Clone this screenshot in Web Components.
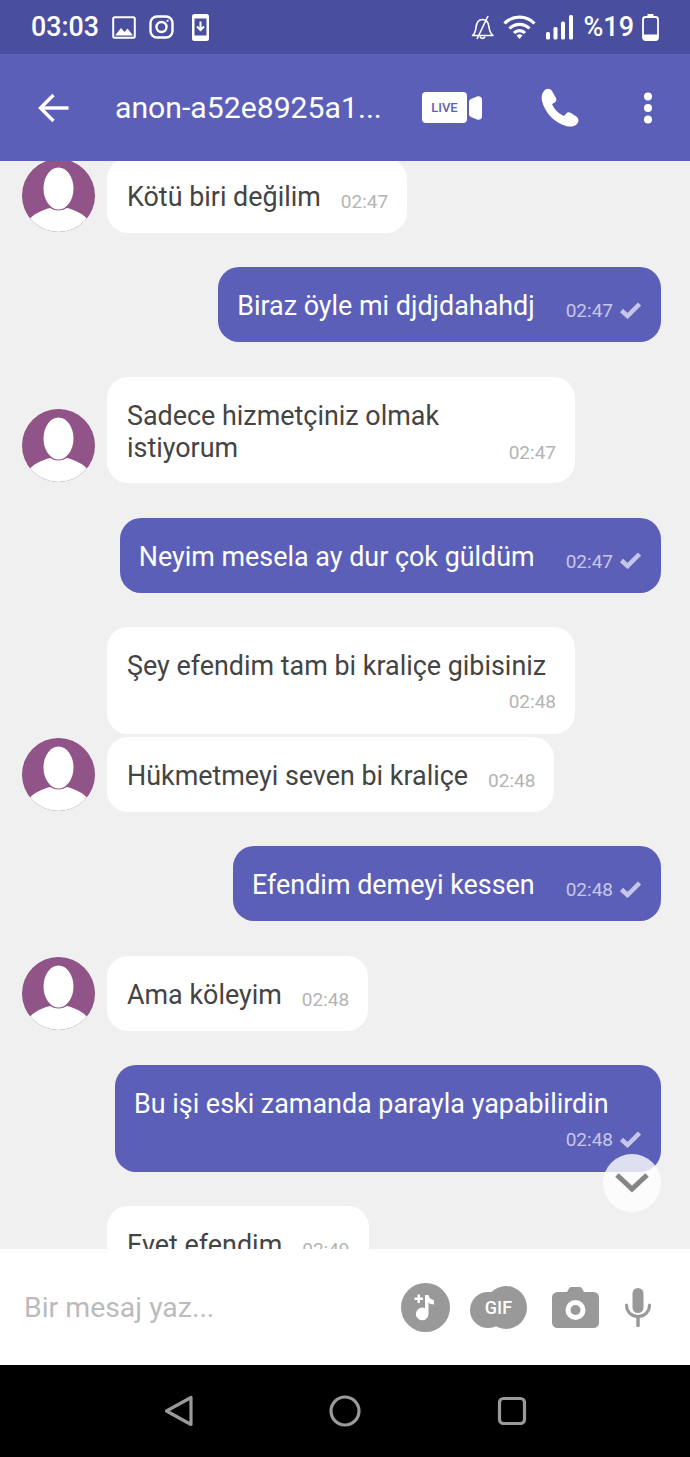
<!DOCTYPE html>
<html lang="tr">
<head>
<meta charset="utf-8">
<title>Chat</title>
<style>
html,body{margin:0;padding:0;background:#f0f0f0;font-family:Roboto,"Noto Sans",sans-serif}
</style>
</head>
<body>
<app-screen>
  <status-bar slot="top"></status-bar>
  <chat-header slot="top" name="anon-a52e8925a1..."></chat-header>
  <chat-msg side="in" avatar time="02:47">Kötü biri değilim</chat-msg>
  <chat-msg side="out" time="02:47">Biraz öyle mi djdjdahahdj</chat-msg>
  <chat-msg side="in" avatar time="02:47">Sadece hizmetçiniz olmak istiyorum</chat-msg>
  <chat-msg side="out" time="02:47">Neyim mesela ay dur çok güldüm</chat-msg>
  <chat-msg side="in" stack time="02:48">Şey efendim tam bi kraliçe gibisiniz</chat-msg>
  <chat-msg side="in" avatar tight time="02:48">Hükmetmeyi seven bi kraliçe</chat-msg>
  <chat-msg side="out" time="02:48">Efendim demeyi kessen</chat-msg>
  <chat-msg side="in" avatar time="02:48">Ama köleyim</chat-msg>
  <chat-msg side="out" stack time="02:48">Bu işi eski zamanda parayla yapabilirdin</chat-msg>
  <chat-msg side="in" time="02:49">Evet efendim</chat-msg>
  <scroll-down slot="overlay"></scroll-down>
  <chat-input slot="bottom" placeholder="Bir mesaj yaz..."></chat-input>
  <nav-bar slot="bottom"></nav-bar>
</app-screen>
<script>
function def(name, css, html, init){
  customElements.define(name, class extends HTMLElement{
    connectedCallback(){
      if(this.shadowRoot) return;
      const r=this.attachShadow({mode:'open'});
      r.innerHTML='<style>'+css+'</style>'+(typeof html==='function'?html(this):html);
      if(init) init(this,r);
    }
  });
}
def('app-screen',`
:host{display:flex;flex-direction:column;width:690px;height:1457px;overflow:hidden;font-family:Roboto,"Noto Sans",sans-serif}
.chat{flex:1;min-height:0;position:relative;overflow:hidden;background:#f0f0f0}
.list{display:flex;flex-direction:column;margin-top:-37.5px;padding:0 29px 0 22px}
`,`<slot name="top"></slot><div class="chat"><div class="list"><slot></slot></div><slot name="overlay"></slot></div><slot name="bottom"></slot>`);

def('status-bar',`
:host{display:flex;align-items:center;height:54px;background:#4a4e9e;color:#fff;box-sizing:border-box;padding:0 31px;flex:none}
.t{font-size:26.800px;font-weight:500;line-height:54px;width:81px}
.p{font-size:27px;font-weight:500;line-height:54px}
svg{display:block;flex:none}
.sp{flex:1}
`,`
<span class="t">03:03</span>
<svg width="24" height="23" viewBox="0 0 24 23" fill="none"><rect x="1.2" y="1.2" width="21.6" height="20.6" rx="1.5" stroke="#fff" stroke-width="2"/><path d="M3 19.5 9 12l3.5 4 3-3.500 5.500 7z" fill="#fff"/></svg>
<svg style="margin-left:13px" width="25" height="24" viewBox="0 0 25 24" fill="none" stroke="#fff" stroke-width="2.4"><rect x="1.5" y="1.5" width="22" height="21" rx="6.5"/><circle cx="12.5" cy="12" r="5"/><circle cx="18.6" cy="5.8" r="1.1" fill="#fff" stroke="none"/></svg>
<svg style="margin-left:18px" width="17" height="27" viewBox="0 0 17 27"><path fill="#fff" d="M2.500 0h12A2.500 2.500 0 0 1 17 2.500v22a2.500 2.500 0 0 1-2.500 2.500h-12A2.500 2.500 0 0 1 0 24.500v-22A2.500 2.500 0 0 1 2.500 0z"/><rect x="2.500" y="4.500" width="12" height="17" fill="#4a4e9e"/><path d="M8.500 7.500v8M5 12.500l3.500 3.500 3.500-3.500" fill="none" stroke="#fff" stroke-width="2"/></svg>
<span class="sp"></span>
<svg width="23" height="25" viewBox="0 0 23 25" fill="none" stroke="#fff" stroke-width="1.6"><path d="M1.500 20.500c2.500-2 3-3.500 3.500-8 .5-5 3-8 6.500-8s6 3 6.500 7.500c.5 4.500 1.500 6.500 4 8.500z" stroke-linejoin="round"/><path d="M9 21.500a2.600 2.600 0 0 0 5 0"/><path d="M17 1 6 24"/></svg>
<svg style="margin-left:9px" width="33" height="25" viewBox="0 0 33 25" fill="none" stroke="#fff" stroke-width="3.200"><path d="M1.500 8.500a21 21 0 0 1 30 0"/><path d="M6.500 13.500a14 14 0 0 1 20 0"/><path d="M11 18a7.500 7.500 0 0 1 11 0"/><path d="M13.500 20.500 16.500 24l3-3.500a4 4 0 0 0-6 0z" fill="#fff" stroke="none"/></svg>
<svg style="margin-left:10px" width="27" height="25" viewBox="0 0 27 25" fill="#fff"><rect x="0" y="17" width="4" height="7.500" rx="1.500"/><rect x="7.500" y="12" width="4" height="12.500" rx="1.500"/><rect x="15" y="6.500" width="4" height="18" rx="1.500"/><rect x="23" y="0" width="4" height="24.500" rx="1.500"/></svg>
<span class="p" style="margin-left:10px">%19</span>
<svg style="margin-left:8px" width="17" height="27" viewBox="0 0 17 27" fill="none"><path d="M5.500 0h6v3h-6z" fill="#fff"/><rect x="1" y="3" width="15" height="23" rx="2.500" stroke="#fff" stroke-width="1.800"/><path d="M1 20.500h15V23.500a2.500 2.500 0 0 1-2.500 2.500h-10A2.500 2.500 0 0 1 1 23.500z" fill="#fff"/></svg>
`);

def('chat-header',`
:host{display:flex;align-items:center;height:107px;background:#5c5fb8;color:#fff;flex:none;box-sizing:border-box;padding:0 34px 0 38px}
.n{font-size:30.200px;line-height:34px;margin-left:46px;flex:1;white-space:nowrap;min-width:0}
svg{display:block;flex:none}
.live{display:flex;align-items:center;gap:2px;width:60px;flex:none}
.tag{width:45px;height:31px;border-radius:4px;background:#fff;color:#5c5fb8;font-size:13px;font-weight:500;line-height:31px;text-align:center}
`,h=>`
<svg width="31" height="30" viewBox="0 0 31 30" fill="none" stroke="#fff" stroke-width="3.400"><path d="M30.500 15H2.500"/><path d="M15.500 2 2.500 15l13 13"/></svg>
<span class="n">${h.getAttribute('name')}</span>
<span class="live"><span class="tag">LIVE</span><svg width="13" height="24" viewBox="0 0 13 24" fill="#fff"><path d="M0 6C0 4.500 .8 3.800 2 3L8 .5C10.500 -.5 13 1 13 3.500v17c0 2.500-2.500 4-5 3L2 21C.8 20.200 0 19.500 0 18Z"/></svg></span>
<svg style="margin-left:58px" width="40" height="40" viewBox="0 0 40 40" fill="#fff"><path d="M4 3C6 0 10 0 12 3L16 10C17 12 16 14 14 15L12 16C14 21 19 26 24 28L26 26C27 24 29 24 31 25L37 29C39 31 39 34 37 36C34 39 30 39 26 38C15 35 5 25 2 13C1 9 2 5 4 3Z"/></svg>
<svg style="margin-left:60px" width="16" height="32" viewBox="0 0 16 32" fill="#fff"><circle cx="8" cy="4.500" r="4"/><circle cx="8" cy="16" r="4"/><circle cx="8" cy="27.500" r="4"/></svg>
`);

def('chat-avatar',`
:host{display:block;width:73px;height:73px;flex:none}
svg{display:block}
`,`<svg width="73" height="73" viewBox="0 0 73 73"><defs><clipPath id="c"><circle cx="36.500" cy="36.500" r="36.500"/></clipPath></defs><g clip-path="url(#c)"><rect width="73" height="73" fill="#915488"/><ellipse cx="36.500" cy="29.500" rx="15" ry="21" fill="#fff"/><path d="M6 62C11 55 20 51 28 49Q36.500 54 45 49C53 51 62 55 67 62V73H6Z" fill="#fff"/></g><circle cx="36.500" cy="36.500" r="36" fill="none" stroke="#000" stroke-opacity=".04"/></svg>`);

def('chat-msg',`
:host{display:flex;align-items:flex-end;margin-top:34.500px;flex:none}
:host([tight]){margin-top:3.200px}
:host([side=out]){justify-content:flex-end}
.slot{width:73px;margin-right:12px;flex:none;margin-bottom:1px}
.b{box-sizing:border-box;display:flex;align-items:flex-end;border-radius:21px;padding:23px 19px 19.800px 20px;background:#fff;color:#444;font-size:26.900px;line-height:32px;max-width:468px}
.t{white-space:normal;min-width:0}
.m{display:flex;align-items:center;flex:none;margin-left:20px;color:#b4b4b4;font-size:19px;line-height:32px;height:32px;transform:translateY(5px)}
:host([side=out]) .b{background:#5c5fb8;color:#fff;max-width:546px;padding:23px 20px 19.800px 19px}
:host([side=out]) .m{color:#c6c7e8;margin-left:31px}
svg{display:block;margin-left:7px}
:host([stack]) .b{flex-direction:column;align-items:stretch;width:468px}
:host([stack][side=out]) .b{width:546px}
:host([stack]) .m{margin-left:auto;margin-top:0;transform:translateY(4px)}
`,h=>{
  const out=h.getAttribute('side')==='out';
  const check=out?'<svg style="transform:translateY(-1px)" width="21" height="17" viewBox="0 0 21 17" fill="none" stroke="#c6c7e8" stroke-width="4.500"><path d="M1.500 8.500 7.500 14 19.500 2"/></svg>':'';
  const av=h.getAttribute('side')==='in'?(h.hasAttribute('avatar')?'<div class="slot"><chat-avatar></chat-avatar></div>':'<div class="slot"></div>'):'';
  return `${av}<div class="b"><span class="t"><slot></slot></span><span class="m">${h.getAttribute('time')}${check}</span></div>`;
});

def('scroll-down',`
:host{position:absolute;left:603px;top:993px;width:58px;height:58px;border-radius:50%;background:rgba(255,255,255,.8);display:flex;align-items:center;justify-content:center}
svg{display:block}
`,`<svg width="34" height="22" viewBox="0 0 34 22" fill="none" stroke="#858585" stroke-width="5"><path d="M2 3 17 17 32 3"/></svg>`);

def('chat-input',`
:host{display:flex;align-items:center;height:116px;background:#fff;box-sizing:border-box;padding:0 39px 0 24px;flex:none}
.p{flex:1;color:#bbb;font-size:28.400px;line-height:34px;margin-top:2px}
svg{display:block;flex:none}
.gif{position:relative;width:57px;height:43px;margin-left:20px;flex:none}
.gif span{position:absolute;inset:0;display:flex;align-items:center;justify-content:center;color:#fff;font-size:18px;font-weight:500;padding-top:1px}
`,h=>`
<span class="p">${h.getAttribute('placeholder')}</span>
<svg width="49" height="49" viewBox="0 0 49 49"><circle cx="24.500" cy="24.500" r="24.500" fill="#999"/><path d="M24 12h3.500c.4 3 2.500 4.500 5.500 5v4.500c-2.500 0-4.500-.8-5.500-2V31a6.300 6.300 0 1 1-3.500-5.700z" fill="#fff"/><path d="M16.500 11.500h2.500v3h3v2.500h-3v3h-2.500v-3h-3v-2.500h3z" fill="#fff"/></svg>
<span class="gif"><svg width="57" height="43" viewBox="0 0 57 43" fill="#999"><circle cx="18" cy="24" r="18"/><ellipse cx="36" cy="21.500" rx="21" ry="21.500"/></svg><span>GIF</span></span>
<svg style="margin-left:25px" width="47" height="41" viewBox="0 0 47 41"><path d="M15 5 17 1.500C17.500.500 18.500 0 19.500 0h8c1 0 2 .5 2.500 1.500L32 5h9.500A5.500 5.500 0 0 1 47 10.500v25a5.500 5.500 0 0 1-5.500 5.500h-36A5.500 5.500 0 0 1 0 35.500v-25A5.500 5.500 0 0 1 5.500 5z" fill="#999"/><circle cx="23.500" cy="23" r="10" fill="#fff"/><circle cx="23.500" cy="23" r="5" fill="#999"/></svg>
<svg style="margin-left:26px" width="26" height="39" viewBox="0 0 26 39" fill="none"><rect x="7.500" y="0" width="11" height="25" rx="5.500" fill="#999"/><path d="M1.500 17c0 7 5 11.500 11.500 11.500S24.500 24 24.500 17" stroke="#999" stroke-width="3" stroke-linecap="round"/><path d="M13 28.500V37.500" stroke="#999" stroke-width="3.500" stroke-linecap="round"/></svg>
`);

def('nav-bar',`
:host{display:flex;align-items:center;justify-content:center;gap:135px;height:92px;background:#000;flex:none;box-sizing:border-box}
svg{display:block;flex:none}
`,`
<svg width="30" height="32" viewBox="0 0 30 32" fill="none" stroke="#9a9a9a" stroke-width="3.200" stroke-linejoin="round"><path d="M27 2.500V29.500L2.500 16Z"/></svg>
<svg width="32" height="32" viewBox="0 0 32 32" fill="none" stroke="#9a9a9a" stroke-width="3.200"><circle cx="16" cy="16" r="14"/></svg>
<svg style="position:relative;left:1px" width="30" height="30" viewBox="0 0 30 30" fill="none" stroke="#9a9a9a" stroke-width="3.200"><rect x="2.500" y="2.500" width="25" height="25" rx="4"/></svg>
`);
</script>
</body>
</html>
